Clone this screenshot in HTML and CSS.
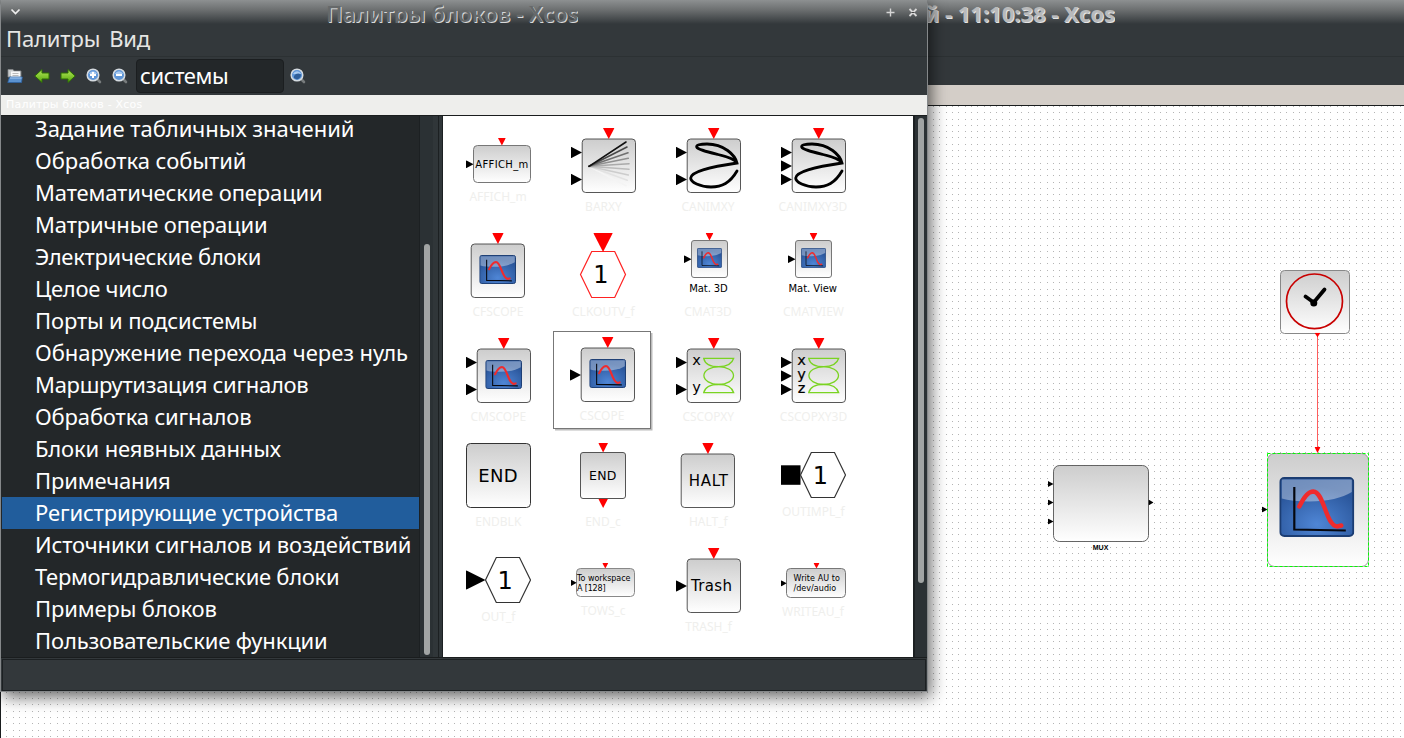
FILE: index.html
```html
<!DOCTYPE html>
<html lang="ru">
<head>
<meta charset="utf-8">
<title>Палитры блоков - Xcos</title>
<link rel="stylesheet" href="styles.css">
</head>
<body>
<svg class="defs" width="0" height="0">
  <defs>
    <linearGradient id="face" x1="0" y1="0" x2="0" y2="1"><stop offset="0" stop-color="#cdcdcd"/><stop offset="1" stop-color="#fff"/></linearGradient>
    <radialGradient id="glass" cx=".5" cy=".8" r=".65"><stop offset="0" stop-color="#4f86d6"/><stop offset="1" stop-color="#2b579c"/></radialGradient>
    <linearGradient id="shine" x1="0" y1="0" x2="1" y2="1"><stop offset="0" stop-color="#fff" stop-opacity=".32"/><stop offset="1" stop-color="#fff" stop-opacity=".4"/></linearGradient>
    <linearGradient id="leaf" x1="0" y1="0" x2="0" y2="1"><stop offset="0" stop-color="#b4e85a"/><stop offset="1" stop-color="#57a80c"/></linearGradient>
    <symbol id="screen" viewBox="0 0 75 60" preserveAspectRatio="none">
      <rect x="1" y="1" width="73" height="58" rx="4" fill="url(#glass)" stroke="#1b3d73" stroke-width="2"/>
      <path d="M2.500 2.500H72.500V15Q58 24 30 24.500Q12 24.500 2.500 21.500Z" fill="url(#shine)"/>
      <path d="M15 10V52.500L66.500 53.500" fill="none" stroke="#06080f" stroke-width="2.200"/>
      <path d="M20 29.500C26 17 30 14.500 34 14.500C45 15 46 48 58 49.500L62 48.500" fill="none" stroke="#ef2b2d" stroke-width="4.400" stroke-linecap="round"/>
    </symbol>
    <symbol id="ev" viewBox="0 0 12 11" preserveAspectRatio="none"><path d="M0 0H12L6 11Z" fill="#f00"/></symbol>
    <symbol id="in" viewBox="0 0 11 12" preserveAspectRatio="none"><path d="M0 0L11 6L0 12Z"/></symbol>
    <g id="box"><rect x="29.200" y="18" width="53.300" height="53.500" rx="3.500" fill="url(#face)" stroke="#444" stroke-width=".9"/></g>
    <g id="curve"><path d="M79 50C72 62 64 66 53 66C42 66 32.500 61 32.700 57C33 50.500 52 46 79 42C77 34 66 23 49 23C42 23 38 24 38.700 26C39.500 28.500 50 31 60 33.500C70 36 77 38 79 42" fill="none" stroke="#000" stroke-width="2.800" stroke-linecap="round"/></g>
    <g id="waves" fill="none" stroke="#7ad321" stroke-width="1.300"><path d="M45.700 27.300H75.700C74 33 68 35.700 60.700 35.700S47 33 45.700 27.300ZM45.700 61.700H75.700C74 56 68 53.300 60.700 53.300S47 56 45.700 61.700Z"/><ellipse cx="60.700" cy="44.600" rx="14.800" ry="8.900"/></g>
    <g id="lens"><path d="M10.500 10.500L14 14" stroke="#777b7c" stroke-width="2.600" stroke-linecap="round"/><circle cx="7" cy="7" r="5.800" fill="#5f96d8" stroke="#d5dbe0" stroke-width="1.500"/><path d="M3 6A4.300 4.300 0 0 1 11 6Z" fill="#a9caf0"/></g>
  </defs>
</svg>

<main class="desktop">
  <section class="editor">
    <header class="titlebar"><span class="editor-title">й - 11:10:38 - Xcos</span></header>
    <div class="menubar"></div>
    <div class="editor-tools"></div>
    <div class="editor-tab"></div>
    <div class="sheet">
      <svg class="diagram" width="1403" height="632" viewBox="1 106 1403 632">
        <path id="grid" fill="#b4b4b4" shape-rendering="crispEdges"/>
        <rect x="1053.500" y="465.500" width="95" height="76" rx="6" fill="url(#face)" stroke="#555" stroke-width=".9"/>
        <use href="#in" x="1048" y="481" width="5.500" height="6"/><use href="#in" x="1048" y="499.500" width="5.500" height="6"/><use href="#in" x="1048" y="518.500" width="5.500" height="6"/><use href="#in" x="1148.500" y="499.500" width="5" height="6"/>
        <text class="mux" x="1092.800" y="550" textLength="15.500">MUX</text>
        <path d="M1317.500 336V449" stroke="#f33" stroke-width=".8"/>
        <rect x="1280.500" y="270.500" width="69" height="63" rx="4" fill="url(#face)" stroke="#888"/>
        <ellipse cx="1314.500" cy="301.300" rx="28" ry="27.300" fill="none" stroke="#c80000" stroke-width="1.700"/>
        <path d="M1305.500 296.500L1313.700 302.500L1324.500 289.500" fill="none" stroke="#000" stroke-width="3.800" stroke-linecap="round"/><circle cx="1313.800" cy="303" r="3.500"/>
        <use href="#ev" x="1314.500" y="332.700" width="6" height="4.500"/>
        <rect x="1267.500" y="453.500" width="101" height="113" rx="7" fill="url(#face)" stroke="#999"/>
        <rect x="1267.500" y="453.500" width="101" height="113" fill="none" stroke="#0f0" stroke-dasharray="3 2"/>
        <use href="#screen" x="1279.300" y="477" width="75" height="60"/>
        <use href="#ev" x="1314.500" y="447" width="6" height="6"/>
        <use href="#in" x="1262" y="506.500" width="5.500" height="6"/>
      </svg>
    </div>
  </section>

  <section class="palettes">
    <header class="titlebar front">
      <svg class="win-menu" width="11" height="8" viewBox="0 0 11 8"><path d="M1.500 1.500L5.500 5.500L9.500 1.500" fill="none" stroke="#eee" stroke-width="1.700"/></svg>
      <span class="palettes-title">Палитры блоков - Xcos</span>
      <span class="win-buttons">
        <svg width="9" height="9" viewBox="0 0 9 9"><path d="M4.500 .5V8.500M.5 4.500H8.500" stroke="#d5d5d5" stroke-width="1.400"/></svg>
        <svg width="10" height="9" viewBox="0 0 10 9"><path d="M1.500 1L8.500 8M8.500 1L1.500 8" stroke="#d8d8d8" stroke-width="1.800"/><path d="M3.500 4.500H6.500" stroke="#444"/></svg>
      </span>
    </header>
    <nav class="menubar"><span>Палитры</span><span>Вид</span></nav>
    <div class="toolbar">
      <svg class="tool open" width="16" height="16" viewBox="0 0 16 16"><path d="M1 1.500H6L7 3H14V9H1Z" fill="#c9cccd" stroke="#85898a" stroke-width=".8"/><path d="M4 3.500H13V11H4Z" fill="#f7f7f7"/><path d="M5.500 5.500H11.500M5.500 7.500H11.500" stroke="#aaa" stroke-width=".8"/><path d="M.8 14.500L2.500 9H15.300L14.500 14.500Z" fill="#5b92d0" stroke="#2f64a5" stroke-width=".8"/><path d="M3 10H14.500" stroke="#a9caef"/></svg>
      <svg class="tool back" width="16" height="16" viewBox="0 0 16 16"><path d="M.8 8L8 1.500V5H15V11H8V14.500Z" fill="url(#leaf)" stroke="#2e6f05"/></svg>
      <svg class="tool next" width="16" height="16" viewBox="0 0 16 16"><path d="M15.200 8L8 1.500V5H1V11H8V14.500Z" fill="url(#leaf)" stroke="#2e6f05"/></svg>
      <svg class="tool zoom-in" width="16" height="16" viewBox="0 0 16 16"><use href="#lens"/><path d="M7 4V10M4 7H10" stroke="#fff" stroke-width="2"/></svg>
      <svg class="tool zoom-out" width="16" height="16" viewBox="0 0 16 16"><use href="#lens"/><path d="M4 7H10" stroke="#fff" stroke-width="2"/></svg>
      <div class="search">системы</div>
      <svg class="tool find" width="16" height="16" viewBox="0 0 16 16"><use href="#lens"/><path d="M4 8Q7 4 11 6.500A4.200 4.200 0 0 1 4 10Z" fill="#2f5e99"/></svg>
    </div>
    <div class="dock-title">Палитры блоков - Xcos</div>
    <div class="content">
      <div class="tree">
        <ul class="list">
          <li>Задание табличных значений</li><li>Обработка событий</li><li class="snug">Математические операции</li><li class="snug">Матричные операции</li><li class="tight">Электрические блоки</li><li class="tight">Целое число</li><li class="snug">Порты и подсистемы</li><li>Обнаружение перехода через нуль</li><li class="tight">Маршрутизация сигналов</li><li class="snug">Обработка сигналов</li><li class="snug">Блоки неявных данных</li><li class="snug">Примечания</li><li class="selected snug">Регистрирующие устройства</li><li class="snug">Источники сигналов и воздействий</li><li class="tight">Термогидравлические блоки</li><li class="snug">Примеры блоков</li><li class="snug">Пользовательские функции</li>
        </ul>
        <div class="tree-scroll"><i></i></div>
      </div>
      <div class="splitter"></div>
      <div class="blocks">
        <svg viewBox="0 0 100 100"><rect x="25.500" y="24.500" width="57" height="37" rx="4" fill="url(#face)" stroke="#777"/><use href="#ev" x="50" y="17" width="7.800" height="7.500"/><use href="#in" x="18" y="39.300" width="7.500" height="8"/><text x="27.300" y="47" font-size="10" textLength="53">AFFICH_m</text><text class="name" x="50" y="80">AFFICH_m</text></svg>
        <svg viewBox="0 0 100 100"><use href="#box"/><use href="#ev" x="50" y="7" width="11.500" height="11"/><use href="#in" x="18" y="25.700" width="11" height="11.600"/><use href="#in" x="18" y="52.700" width="11" height="11.600"/>
          <g stroke-width="1.600" stroke-linecap="round"><path d="M36 45.300L73 64.700" stroke="#f4f4f4"/><path d="M36 45.300L74.300 59.300" stroke="#e2e2e2"/><path d="M36 45.300L75.300 54" stroke="#ccc"/><path d="M36 45.300L76 48.300" stroke="#bbb"/><path d="M36 45.300L76 42.700" stroke="#aaa"/><path d="M36 45.300L75.300 37.300" stroke="#909090"/><path d="M36 45.300L75 31.700" stroke="#707070"/><path d="M36 45.300L74 26" stroke="#484848"/><path d="M36 45.300L73 21" stroke="#111"/></g><text class="name" x="50.500" y="90">BARXY</text></svg>
        <svg viewBox="0 0 100 100"><use href="#box"/><use href="#ev" x="50" y="7" width="11.500" height="11"/><use href="#in" x="18" y="25.700" width="11" height="11.600"/><use href="#in" x="18" y="52.700" width="11" height="11.600"/><use href="#curve"/><text class="name" x="50" y="90">CANIMXY</text></svg>
        <svg viewBox="0 0 100 100"><use href="#box"/><use href="#ev" x="50" y="7" width="11.500" height="11"/><use href="#in" x="18" y="25.700" width="11" height="11.600"/><use href="#in" x="18" y="39.200" width="11" height="11.600"/><use href="#in" x="18" y="52.700" width="11" height="11.600"/><use href="#curve"/><text class="name" x="50" y="90">CANIMXY3D</text></svg>

        <svg viewBox="0 0 100 100"><use href="#box" x="-6"/><use href="#ev" x="44.200" y="7" width="11.500" height="11"/><use href="#screen" x="31.300" y="29" width="36.700" height="29"/><text class="name" x="50" y="90">CFSCOPE</text></svg>
        <svg viewBox="0 0 100 100"><path d="M27.500 48.500L38.700 25.500H61.700L72.500 48.500L61.700 71.500H38.700Z" fill="#fff" stroke="#f22" stroke-width="1.200"/><use href="#ev" x="40.300" y="7" width="19.500" height="19"/><text x="40.200" y="57.300" font-size="24">1</text><text class="name" x="50.300" y="90">CLKOUTV_f</text></svg>
        <svg viewBox="0 0 100 100"><rect x="33.500" y="14.500" width="36" height="37" rx="2.500" fill="url(#face)" stroke="#777"/><use href="#ev" x="47.600" y="7" width="7.800" height="7.500"/><use href="#in" x="26" y="29.300" width="7.500" height="7.800"/><use href="#screen" x="39" y="22" width="25" height="20"/><text x="31.300" y="66" font-size="10" textLength="38.500">Mat. 3D</text><text class="name" x="50" y="90">CMAT3D</text></svg>
        <svg viewBox="0 0 100 100"><rect x="32.500" y="14.500" width="36" height="37" rx="2.500" fill="url(#face)" stroke="#777"/><use href="#ev" x="46.600" y="7" width="7.800" height="7.500"/><use href="#in" x="25" y="29.300" width="7.500" height="7.800"/><use href="#screen" x="38" y="22" width="25" height="20"/><text x="25.500" y="66" font-size="10" textLength="48.500">Mat. View</text><text class="name" x="50.500" y="90">CMATVIEW</text></svg>

        <svg viewBox="0 0 100 100"><use href="#box"/><use href="#ev" x="50" y="7" width="11.500" height="11"/><use href="#in" x="18" y="25.700" width="11" height="11.600"/><use href="#in" x="18" y="52.700" width="11" height="11.600"/><use href="#screen" x="37.300" y="29" width="36.700" height="29"/><text class="name" x="50.300" y="90">CMSCOPE</text></svg>
        <svg class="picked" viewBox="0 0 100 100"><path d="M2 98.500H98.500V2" fill="none" stroke="#bbb" stroke-width="2"/><rect x=".5" y=".5" width="97" height="97" fill="#fff" stroke="#777"/><g transform="translate(-1 -1)"><use href="#box"/><use href="#ev" x="50" y="7" width="11.500" height="11"/><use href="#in" x="18" y="39.200" width="11" height="11.600"/><use href="#screen" x="37.300" y="29" width="36.700" height="29"/><text class="name" x="50" y="90">CSCOPE</text></g></svg>
        <svg viewBox="0 0 100 100"><use href="#box"/><use href="#ev" x="50" y="7" width="11.500" height="11"/><use href="#in" x="18" y="25.700" width="11" height="11.600"/><use href="#in" x="18" y="52.700" width="11" height="11.600"/><use href="#waves"/><g font-size="14.500"><text x="34.300" y="34">x</text><text x="34.300" y="60.700">y</text></g><text class="name" x="50.300" y="90">CSCOPXY</text></svg>
        <svg viewBox="0 0 100 100"><use href="#box"/><use href="#ev" x="50" y="7" width="11.500" height="11"/><use href="#in" x="18" y="25.700" width="11" height="11.600"/><use href="#in" x="18" y="39.200" width="11" height="11.600"/><use href="#in" x="18" y="52.700" width="11" height="11.600"/><use href="#waves"/><g font-size="14.500" stroke="#000" stroke-width=".2"><text x="34.300" y="34">x</text><text x="34.300" y="47.500">y</text><text x="34.700" y="62.300">z</text></g><text class="name" x="50.500" y="90">CSCOPXY3D</text></svg>

        <svg viewBox="0 0 100 100"><rect x="18.500" y="7.500" width="64" height="64" rx="4" fill="url(#face)" stroke="#333"/><text x="30.200" y="45.700" font-size="18" textLength="39.500">END</text><text class="name" x="50.300" y="90">ENDBLK</text></svg>
        <svg viewBox="0 0 100 100"><rect x="27.500" y="16.500" width="45" height="46" rx="2.500" fill="url(#face)" stroke="#555"/><use href="#ev" x="45.300" y="7" width="9.700" height="9.500"/><use href="#ev" x="45.300" y="62.700" width="9.700" height="9.300"/><text x="36" y="44.300" font-size="12.500" textLength="27.500">END</text><text class="name" x="50" y="90">END_c</text></svg>
        <svg viewBox="0 0 100 100"><use href="#box" x="-6"/><use href="#ev" x="44.200" y="7" width="11.500" height="11"/><text x="30.800" y="50.300" font-size="15" textLength="39">HALT</text><text class="name" x="50.300" y="90">HALT_f</text></svg>
        <svg viewBox="0 0 100 100"><rect x="18" y="29.300" width="19.500" height="19.500"/><path d="M37.500 39L48.300 16.500H71.500L82.500 39L71.500 61.500H48.300Z" fill="#fff" stroke="#333" stroke-width="1.200"/><text x="49.800" y="47.500" font-size="24">1</text><text class="name" x="50.300" y="80">OUTIMPL_f</text></svg>

        <svg viewBox="0 0 100 100"><use href="#in" x="18" y="29.300" width="19.500" height="19.500"/><path d="M37.500 39L48.300 16.500H71.500L82.500 39L71.500 61.500H48.300Z" fill="#fff" stroke="#333" stroke-width="1.200"/><text x="49.600" y="48" font-size="24">1</text><text class="name" x="50.300" y="80">OUT_f</text></svg>
        <svg viewBox="0 0 100 100"><rect x="23.500" y="27.500" width="58" height="28" rx="4" fill="url(#face)" stroke="#888"/><use href="#ev" x="49.300" y="22" width="6" height="5.500"/><use href="#in" x="18" y="38.700" width="5.700" height="6.300"/><text x="24" y="39.700" font-size="8" textLength="53.500">To workspace</text><text x="24" y="49.500" font-size="8" textLength="28.500">A [128]</text><text class="name" x="50.300" y="74.300">TOWS_c</text></svg>
        <svg viewBox="0 0 100 100"><use href="#box"/><use href="#ev" x="50" y="7" width="11.500" height="11"/><use href="#in" x="18" y="39.200" width="11" height="11.600"/><text x="33" y="50" font-size="15" textLength="41">Trash</text><text class="name" x="50.500" y="90">TRASH_f</text></svg>
        <svg viewBox="0 0 100 100"><rect x="23.500" y="27.500" width="59" height="29" rx="4" fill="url(#face)" stroke="#777"/><use href="#ev" x="50.500" y="22" width="6" height="5.500"/><use href="#in" x="18" y="39.200" width="5.700" height="6.300"/><text x="30.500" y="40.300" font-size="8" textLength="46.500">Write AU to</text><text x="30.500" y="50.300" font-size="8" textLength="42.700">/dev/audio</text><text class="name" x="50" y="75">WRITEAU_f</text></svg>
      </div>
      <div class="blocks-scroll"><i></i></div>
    </div>
    <footer class="status"><div></div></footer>
  </section>
</main>
<script src="grid.js"></script>
</body>
</html>
```
FILE: styles.css
```css
* { box-sizing: border-box; }
body { margin: 0; font-family: "Noto Sans", sans-serif; }
.defs { position: absolute; }
.desktop { position: relative; width: 1404px; height: 738px; overflow: hidden; background: #fff; }
.titlebar { height: 24px; flex: none; display: flex; align-items: center; background: linear-gradient(#8d9091, #6d7071 40%, #33383b 100%); }
.menubar { height: 33px; flex: none; display: flex; gap: 9px; padding-left: 5px; background: #33383b; border-bottom: 1px solid #2c3133; color: #e6e6e4; font-size: 22px; line-height: 29px; letter-spacing: -.15px; }

.editor { position: absolute; inset: 0; display: flex; flex-direction: column; }
.editor .titlebar { justify-content: flex-end; padding-right: 289px; }
.editor-title, .palettes-title { align-self: flex-start; height: 23px; padding-top: 1px; overflow: hidden; font-size: 22px; line-height: 24px; white-space: nowrap; }
.editor-title { color: #b9babb; font-weight: 700; text-shadow: 1px 1px 0 #e4e4e4; }
.editor-tools { height: 28px; background: #33383b; }
.editor-tab { height: 20px; background: #d4cec8; }
.sheet { flex: 1; border-top: 1px solid #1a1d1e; border-left: 1px solid #1a1d1e; }
.diagram { display: block; }
.mux { font: 700 7px "Liberation Sans", sans-serif; }

.palettes { position: absolute; left: 0; top: 0; width: 928px; height: 692px; display: flex; flex-direction: column; border: solid #85888a; border-width: 0 1px 1px; border-radius: 5px 5px 0 0; background: #33383b; box-shadow: 3px 5px 16px rgba(0, 0, 0, .6); }
.front { padding: 0 9px; }
.palettes-title { margin-left: 305px; color: #66696a; font-weight: 600; text-shadow: 1px 1px 0 #d8d9da; }
.win-buttons { display: flex; gap: 13px; margin-left: auto; }
.toolbar { height: 38px; flex: none; display: flex; align-items: center; padding: 0 0 0 6px; }
.tool { flex: none; }
.back { margin-left: 11px; }
.next { margin-left: 10px; }
.zoom-in { margin-left: 10px; }
.zoom-out { margin-left: 10px; }
.search { width: 148px; height: 34px; margin: 0 6px 0 8px; padding-left: 3px; border: 1px solid #1b1e20; border-radius: 4px; background: #232729; color: #fff; font-size: 22px; line-height: 31px; letter-spacing: -.4px; }
.dock-title { height: 20px; flex: none; padding-left: 5px; background: #eeeeec; color: #fff; font: 11px/20px "DejaVu Sans", sans-serif; letter-spacing: .2px; }
.content { height: 543px; flex: none; display: flex; border-top: 1px solid #1a1d1e; border-bottom: 1px solid #1a1d1e; }
.tree { width: 432px; display: flex; background: #2b3134; overflow: hidden; }
.list { width: 419px; margin: -3px 0 0; padding: 0; list-style: none; background: #232729; border-right: 1px solid #1c2022; }
.list li { height: 32px; padding-left: 33px; margin-left: 1px; color: #fff; font-size: 22px; line-height: 31px; white-space: nowrap; letter-spacing: -.03px; }
.list .snug { letter-spacing: -.15px; }
.list .tight { letter-spacing: -.29px; }
.list .selected { background: #215d9c; }
.tree-scroll { width: 13px; padding: 128px 0 0 4px; }
.tree-scroll i { display: block; width: 6px; height: 411px; border-radius: 3px; background: #a1a4a4; }
.splitter { width: 10px; background: #303639; border: solid #1c2022; border-width: 0 1px; border-left-color: #303639; box-shadow: inset 4px 0 #303639, inset 5px 0 #1c2022; }
.blocks { width: 470px; padding: 5px 0 0 5px; display: grid; grid-template-columns: repeat(4, 100px); grid-auto-rows: 100px; gap: 5px; background: #fff; overflow: hidden; }
.blocks svg { width: 100px; height: 100px; font-family: "DejaVu Sans", sans-serif; }
.blocks .name { font: 12px "Noto Sans", sans-serif; fill: #efefed; text-anchor: middle; }
.blocks-scroll { flex: 1; padding: 2px 0 0 3px; background: #2b3134; border-left: 2px solid #1c2022; }
.blocks-scroll i { display: block; width: 6px; height: 465px; border-radius: 3px; background: #a1a4a4; }
.status { flex: 1; padding: 1px 1px 0; }
.status div { height: 100%; border: 1px solid #1c2022; }
```
FILE: grid.js
```js
// Plots the one-pixel grid dots, snapped to whole pixels.
const step = 6.305;
let dots = "";
for (let j = 0; ; j++) {
  const y = Math.floor(106.4 + j * 6.3);
  if (y >= 738) break;
  for (let i = 1; i < 223; i++) dots += `M${Math.floor(0.5 + i * step)} ${y}h1v1h-1z`;
}
document.getElementById("grid").setAttribute("d", dots);
```
